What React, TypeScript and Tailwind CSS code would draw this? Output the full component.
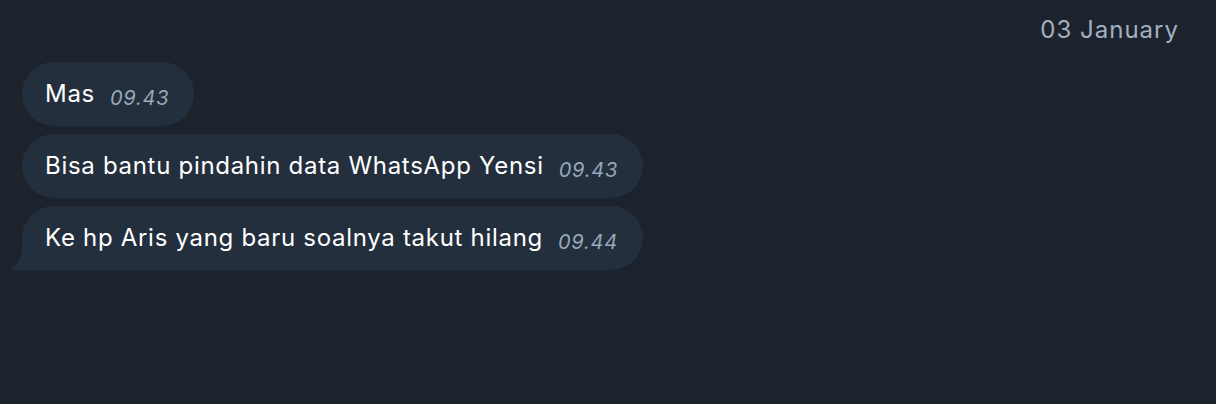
import React from "react";

const font = { fontFamily: "Inter, 'Noto Sans', sans-serif" };

function Bubble({ text, time, tail }: { text: string; time: string; tail?: boolean }) {
  return (
    <div className="relative flex">
      <div
        className={`flex items-center h-[64px] bg-[#242f3d] pl-[23px] pr-[25px] ${
          tail ? "rounded-t-[32px] rounded-br-[32px] rounded-bl-[8px]" : "rounded-[32px]"
        }`}
      >
        <span className="text-[24px] tracking-[0.7px] text-white leading-none">{text}</span>
        <span className="ml-[15px] mt-[7px] text-[20px] tracking-[0.8px] italic text-[#98a7ba] leading-none">{time}</span>
      </div>
      {tail && (
        <svg className="absolute left-[-12px] bottom-0" width="30" height="30" viewBox="0 0 30 30">
          <path d="M12 0 L30 0 L30 30 L12 30 Q4 30 0 29 Q10 24 12 10 Z" fill="#242f3d" />
        </svg>
      )}
    </div>
  );
}

export default function App() {
  return (
    <div className="w-[1216px] h-[404px] bg-[#1c232d] flex flex-col" style={font}>
      <div className="flex justify-end pr-[37px] pt-[15px]">
        <span className="text-[24px] tracking-[1px] text-[#a3b0c2] leading-[30px]">03 January</span>
      </div>
      <div className="flex flex-col items-start gap-[8px] pl-[22px] mt-[17px]">
        <Bubble text="Mas" time="09.43" />
        <Bubble text="Bisa bantu pindahin data WhatsApp Yensi" time="09.43" />
        <Bubble text="Ke hp Aris yang baru soalnya takut hilang" time="09.44" tail />
      </div>
    </div>
  );
}
